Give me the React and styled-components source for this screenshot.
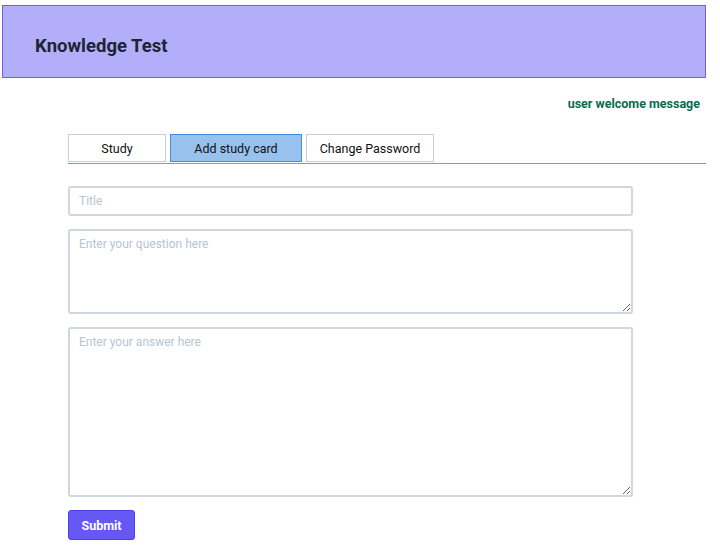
import styled, { createGlobalStyle } from "styled-components";
import { useState } from "react";

const GlobalStyle = createGlobalStyle`
  body {
    margin: 0;
    background: #fff;
    font-family: "Roboto", "Liberation Sans", sans-serif;
  }
`;

const App = () => {
  const [tab, setTab] = useState("add");

  return (
    <>
      <GlobalStyle />
      <Page>
        <Header>
          <Brand>Knowledge Test</Brand>
        </Header>
        <Welcome>user welcome message</Welcome>
        <TabBar>
          <Tab $active={tab === "study"} $width={98} onClick={() => setTab("study")}>Study</Tab>
          <Tab $active={tab === "add"} $width={132} onClick={() => setTab("add")}>Add study card</Tab>
          <Tab $active={tab === "password"} $width={128} onClick={() => setTab("password")}>Change Password</Tab>
        </TabBar>
        <Form onSubmit={(e) => e.preventDefault()}>
          <Input placeholder="Title" />
          <TextArea $height={85} placeholder="Enter your question here" />
          <TextArea $height={170} placeholder="Enter your answer here" />
          <SubmitButton type="submit">Submit</SubmitButton>
        </Form>
      </Page>
    </>
  );
};

/* Styled Components */
const Page = styled.div`
  padding: 5px 14px 16px 2px;
`;

const Header = styled.header`
  box-sizing: border-box;
  height: 73px;
  display: flex;
  align-items: center;
  padding: 8px 0 0 32px;
  background: #b3aefa;
  border: 1px solid #6b61f0;
`;

const Brand = styled.h1`
  margin: 0;
  font-size: 18.5px;
  font-weight: 700;
  color: #1d2433;
`;

const Welcome = styled.p`
  margin: 18px 6px 0 0;
  text-align: right;
  font-size: 12.5px;
  font-weight: 700;
  color: #0b6b50;
`;

const TabBar = styled.div`
  display: flex;
  gap: 4px;
  margin: 23px 0 0 66px;
  border-bottom: 1px solid #8a9ab0;
`;

const Tab = styled.button`
  width: ${(p) => p.$width}px;
  height: 28px;
  margin-bottom: 1px;
  font-family: inherit;
  font-size: 12.5px;
  color: #111;
  background: ${(p) => (p.$active ? "#98c2ee" : "#fff")};
  border: 1px solid ${(p) => (p.$active ? "#3f8de0" : "#c4d0de")};
  cursor: pointer;
`;

const Form = styled.form`
  display: flex;
  flex-direction: column;
  align-items: flex-start;
  gap: 13px;
  width: 565px;
  margin: 22px 0 0 66px;
`;

const Input = styled.input`
  box-sizing: border-box;
  width: 100%;
  height: 30px;
  padding: 0 9px;
  font-family: inherit;
  font-size: 12px;
  border: 2px solid #cfd7e0;
  border-radius: 3px;
  outline: none;

  &::placeholder {
    color: #b8c4d2;
  }
`;

const TextArea = styled.textarea`
  box-sizing: border-box;
  width: 100%;
  height: ${(p) => p.$height}px;
  padding: 6px 9px;
  font-family: inherit;
  font-size: 12px;
  border: 2px solid #cfd7e0;
  border-radius: 3px;
  outline: none;

  &::placeholder {
    color: #b8c4d2;
  }
`;

const SubmitButton = styled.button`
  width: 67px;
  height: 30px;
  font-family: inherit;
  font-size: 12.5px;
  font-weight: 700;
  color: #fff;
  background: #6558f5;
  border: 1px solid #4c3ff0;
  border-radius: 3px;
  cursor: pointer;
`;

export default App;
